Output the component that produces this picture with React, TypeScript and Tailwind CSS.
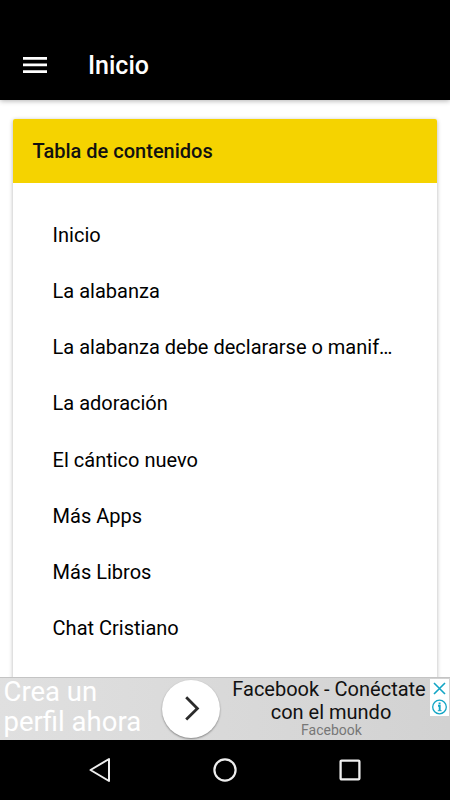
const items = [
  "Inicio",
  "La alabanza",
  "La alabanza debe declararse o manifestarse",
  "La adoración",
  "El cántico nuevo",
  "Más Apps",
  "Más Libros",
  "Chat Cristiano",
  "Versículos de fé",
]

function AppBar() {
  return (
    <header className="relative z-10 flex h-[100px] shrink-0 items-end bg-black pl-[23px] shadow-[0_1px_5px_rgba(0,0,0,0.3)]">
      <button className="mb-[26px] w-6" aria-label="Menu">
        <svg width="24" height="17" viewBox="0 0 24 17" fill="#fff">
          <path d="M0 0h24v2.7H0zM0 6.5h24v2.7H0zM0 13.2h24v2.7H0z" />
        </svg>
      </button>
      <h1 className="mb-[19px] ml-[41px] text-[25px] leading-[30px] font-medium text-white">Inicio</h1>
    </header>
  )
}

function AdBanner() {
  return (
    <aside className="relative flex h-[63px] shrink-0 border-t border-[#c4c4c4] bg-linear-to-r from-[#e0e0e0] to-[#d2d2d2]">
      <p className="-mt-px w-[162px] pl-[3.5px] text-[27.5px] leading-[30px] whitespace-nowrap text-white">
        Crea un
        <br />
        perfil ahora
      </p>
      <button
        className="mt-[2px] flex size-[58px] items-center justify-center rounded-full bg-white shadow-[0_1px_2px_rgba(0,0,0,0.4)]"
        aria-label="Abrir"
      >
        <svg className="-mt-[2px] ml-[3px]" width="15" height="25" viewBox="0 0 15 25" fill="none" stroke="#2b2b2b" strokeWidth="2.8">
          <path d="M1.2 1.2l11.2 11.2L1.2 23.6" />
        </svg>
      </button>
      <div className="w-[218px] text-center whitespace-nowrap">
        <p className="text-[20px] leading-[22.5px] text-[#111]">
          Facebook - Conéctate
          <br />
          <span className="ml-[4px]">con el mundo</span>
        </p>
        <p className="ml-[5px] text-[14px] leading-[14px] text-[#777]">Facebook</p>
      </div>
      {/* Ad choices */}
      <div className="absolute top-[1px] right-[1px] h-[37px] w-[19px] bg-white text-[#12a5c5]">
        <svg width="19" height="37" viewBox="0 0 19 37" fill="none" stroke="currentColor" strokeWidth="1.6">
          <path d="M4 4l11 11M15 4L4 15" />
          <circle cx="9.5" cy="28" r="6.8" strokeWidth="1.3" />
          <path d="M8 26.8h1.7v5M9.6 23.4v1.8" strokeWidth="1.9" />
          <path d="M7.8 31.7h3.8" strokeWidth="1" />
        </svg>
      </div>
    </aside>
  )
}

function NavigationBar() {
  return (
    <nav className="flex h-[60px] shrink-0 items-center justify-center gap-[101px] bg-black">
      <svg width="24" height="26" viewBox="0 0 24 26" fill="none" stroke="#eee" strokeWidth="2" strokeLinejoin="round">
        <path d="M21 2v22L2.5 13z" />
      </svg>
      <svg width="24" height="24" viewBox="0 0 24 24" fill="none" stroke="#eee" strokeWidth="2.2">
        <circle cx="12" cy="12" r="10.6" />
      </svg>
      <svg width="24" height="24" viewBox="0 0 24 24" fill="none" stroke="#eee" strokeWidth="2.3">
        <rect x="2.6" y="2.6" width="18.8" height="18.8" rx="1" />
      </svg>
    </nav>
  )
}

export default function App() {
  return (
    <div className="flex h-[800px] w-[450px] flex-col overflow-hidden bg-white font-['Roboto',sans-serif]">
      <AppBar />

      {/* Table of contents */}
      <main className="min-h-0 flex-1 overflow-hidden px-[12.6px] pt-[19.4px]">
        <section className="rounded-[2px] shadow-[0_1px_4px_rgba(0,0,0,0.3)]">
          <h2 className="flex h-[63.4px] items-center rounded-t-[2px] bg-[#f5d300] pl-5 text-[20px] font-medium text-[#111]">
            Tabla de contenidos
          </h2>
          <ul className="px-10 pt-[23.8px] text-[20px] text-black">
            {items.map((item) => (
              <li key={item} className="h-[56.25px] truncate leading-[56.25px] last:pt-[1px]">
                {item}
              </li>
            ))}
          </ul>
        </section>
      </main>

      <AdBanner />
      <NavigationBar />
    </div>
  )
}
